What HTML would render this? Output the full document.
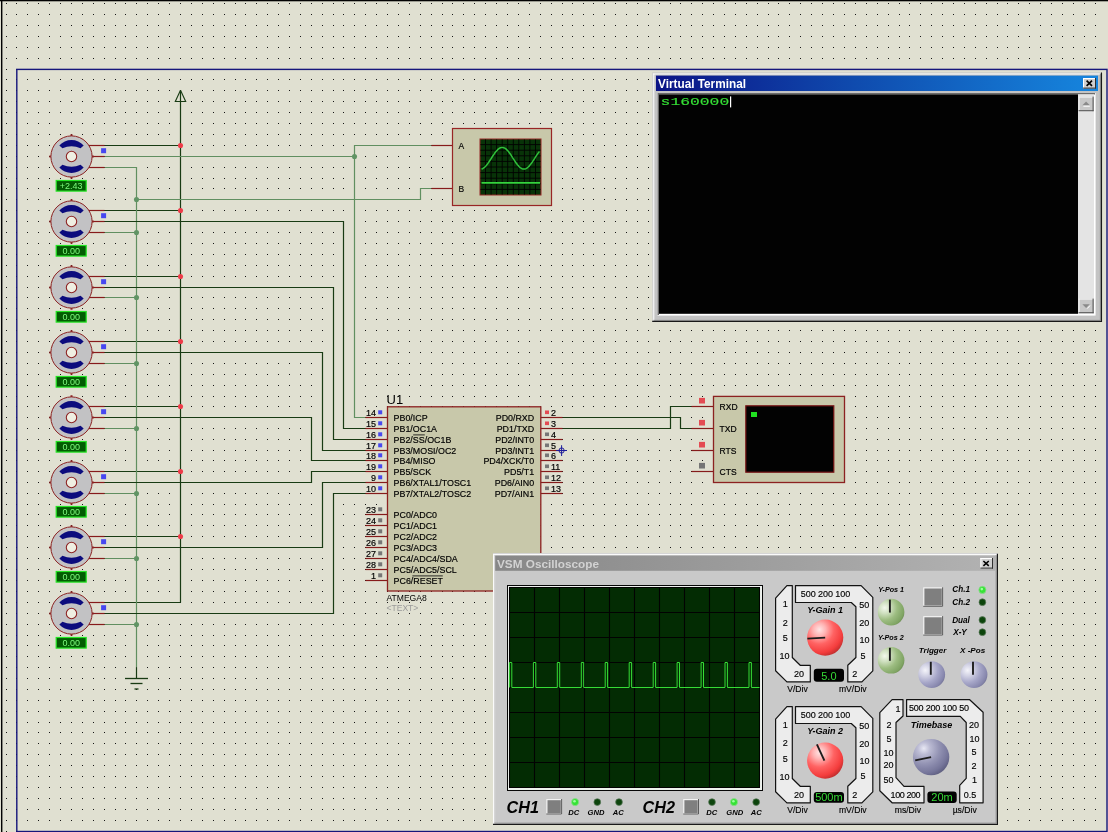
<!DOCTYPE html>
<html><head><meta charset="utf-8"><title>Proteus</title>
<style>html,body{margin:0;padding:0;background:#e0e0d1;overflow:hidden}svg{display:block}</style></head>
<body><svg width="1108" height="832" viewBox="0 0 1108 832">
<rect width="1108" height="832" fill="#e0e0d1"/>
<g opacity="0.996">
<defs><g id="r">
<rect x="6" width="1" height="1"/><rect x="16" width="1" height="1"/><rect x="27" width="1" height="1"/><rect x="38" width="1" height="1"/><rect x="49" width="1" height="1"/><rect x="60" width="1" height="1"/><rect x="71" width="1" height="1"/><rect x="82" width="1" height="1"/><rect x="93" width="1" height="1"/><rect x="104" width="1" height="1"/><rect x="115" width="1" height="1"/><rect x="125" width="1" height="1"/><rect x="136" width="1" height="1"/><rect x="147" width="1" height="1"/><rect x="158" width="1" height="1"/><rect x="169" width="1" height="1"/><rect x="180" width="1" height="1"/><rect x="191" width="1" height="1"/><rect x="202" width="1" height="1"/><rect x="213" width="1" height="1"/><rect x="224" width="1" height="1"/><rect x="235" width="1" height="1"/><rect x="245" width="1" height="1"/><rect x="256" width="1" height="1"/><rect x="267" width="1" height="1"/><rect x="278" width="1" height="1"/><rect x="289" width="1" height="1"/><rect x="300" width="1" height="1"/><rect x="311" width="1" height="1"/><rect x="322" width="1" height="1"/><rect x="333" width="1" height="1"/><rect x="343" width="1" height="1"/><rect x="354" width="1" height="1"/><rect x="365" width="1" height="1"/><rect x="376" width="1" height="1"/><rect x="387" width="1" height="1"/><rect x="398" width="1" height="1"/><rect x="409" width="1" height="1"/><rect x="420" width="1" height="1"/><rect x="431" width="1" height="1"/><rect x="442" width="1" height="1"/><rect x="452" width="1" height="1"/><rect x="463" width="1" height="1"/><rect x="474" width="1" height="1"/><rect x="485" width="1" height="1"/><rect x="496" width="1" height="1"/><rect x="507" width="1" height="1"/><rect x="518" width="1" height="1"/><rect x="529" width="1" height="1"/><rect x="540" width="1" height="1"/><rect x="551" width="1" height="1"/><rect x="562" width="1" height="1"/><rect x="572" width="1" height="1"/><rect x="583" width="1" height="1"/><rect x="593" width="1" height="1"/><rect x="604" width="1" height="1"/><rect x="615" width="1" height="1"/><rect x="626" width="1" height="1"/><rect x="637" width="1" height="1"/><rect x="648" width="1" height="1"/><rect x="659" width="1" height="1"/><rect x="670" width="1" height="1"/><rect x="680" width="1" height="1"/><rect x="691" width="1" height="1"/><rect x="702" width="1" height="1"/><rect x="713" width="1" height="1"/><rect x="724" width="1" height="1"/><rect x="735" width="1" height="1"/><rect x="746" width="1" height="1"/><rect x="757" width="1" height="1"/><rect x="768" width="1" height="1"/><rect x="778" width="1" height="1"/><rect x="789" width="1" height="1"/><rect x="800" width="1" height="1"/><rect x="811" width="1" height="1"/><rect x="822" width="1" height="1"/><rect x="833" width="1" height="1"/><rect x="844" width="1" height="1"/><rect x="855" width="1" height="1"/><rect x="866" width="1" height="1"/><rect x="877" width="1" height="1"/><rect x="888" width="1" height="1"/><rect x="899" width="1" height="1"/><rect x="909" width="1" height="1"/><rect x="920" width="1" height="1"/><rect x="931" width="1" height="1"/><rect x="942" width="1" height="1"/><rect x="953" width="1" height="1"/><rect x="964" width="1" height="1"/><rect x="975" width="1" height="1"/><rect x="986" width="1" height="1"/><rect x="997" width="1" height="1"/><rect x="1007" width="1" height="1"/><rect x="1018" width="1" height="1"/><rect x="1029" width="1" height="1"/><rect x="1040" width="1" height="1"/><rect x="1051" width="1" height="1"/><rect x="1062" width="1" height="1"/><rect x="1073" width="1" height="1"/><rect x="1084" width="1" height="1"/><rect x="1095" width="1" height="1"/>
</g></defs>
<g fill="#141414">
<use href="#r" y="3"/><use href="#r" y="14"/><use href="#r" y="25"/><use href="#r" y="36"/><use href="#r" y="47"/><use href="#r" y="58"/><use href="#r" y="69"/><use href="#r" y="79"/><use href="#r" y="90"/><use href="#r" y="101"/><use href="#r" y="112"/><use href="#r" y="123"/><use href="#r" y="134"/><use href="#r" y="145"/><use href="#r" y="156"/><use href="#r" y="167"/><use href="#r" y="178"/><use href="#r" y="188"/><use href="#r" y="199"/><use href="#r" y="210"/><use href="#r" y="221"/><use href="#r" y="232"/><use href="#r" y="243"/><use href="#r" y="254"/><use href="#r" y="265"/><use href="#r" y="276"/><use href="#r" y="287"/><use href="#r" y="297"/><use href="#r" y="308"/><use href="#r" y="319"/><use href="#r" y="330"/><use href="#r" y="341"/><use href="#r" y="352"/><use href="#r" y="363"/><use href="#r" y="374"/><use href="#r" y="385"/><use href="#r" y="396"/><use href="#r" y="406"/><use href="#r" y="417"/><use href="#r" y="428"/><use href="#r" y="439"/><use href="#r" y="450"/><use href="#r" y="460"/><use href="#r" y="471"/><use href="#r" y="482"/><use href="#r" y="493"/><use href="#r" y="504"/><use href="#r" y="514"/><use href="#r" y="525"/><use href="#r" y="536"/><use href="#r" y="547"/><use href="#r" y="558"/><use href="#r" y="569"/><use href="#r" y="580"/><use href="#r" y="591"/><use href="#r" y="602"/><use href="#r" y="613"/><use href="#r" y="624"/><use href="#r" y="635"/><use href="#r" y="645"/><use href="#r" y="656"/><use href="#r" y="667"/><use href="#r" y="678"/><use href="#r" y="689"/><use href="#r" y="700"/><use href="#r" y="711"/><use href="#r" y="722"/><use href="#r" y="732"/><use href="#r" y="743"/><use href="#r" y="754"/><use href="#r" y="765"/><use href="#r" y="776"/><use href="#r" y="787"/><use href="#r" y="798"/><use href="#r" y="809"/><use href="#r" y="820"/><use href="#r" y="831"/>
</g>
<rect x="1" y="0" width="1.4" height="832" fill="#000"/>
<rect x="0" y="0" width="1108" height="1.3" fill="#000"/>
<rect x="16.8" y="69.4" width="1090.2" height="762.1" fill="none" stroke="#15157a" stroke-width="1.4"/>
<path d="M180.5 90.5 L180.5 602.5" fill="none" stroke="#173a12" stroke-width="1.2" />
<path d="M180.5 90.2 L175.3 101.5 L185.7 101.5 L180.5 90.2" fill="none" stroke="#173a12" stroke-width="1.1" stroke-linejoin="miter"/>
<path d="M104.5 145.5 L180.5 145.5" fill="none" stroke="#173a12" stroke-width="1.2" />
<path d="M104.5 210.5 L180.5 210.5" fill="none" stroke="#173a12" stroke-width="1.2" />
<path d="M104.5 276.5 L180.5 276.5" fill="none" stroke="#173a12" stroke-width="1.2" />
<path d="M104.5 341.5 L180.5 341.5" fill="none" stroke="#173a12" stroke-width="1.2" />
<path d="M104.5 406.5 L180.5 406.5" fill="none" stroke="#173a12" stroke-width="1.2" />
<path d="M104.5 471.5 L180.5 471.5" fill="none" stroke="#173a12" stroke-width="1.2" />
<path d="M104.5 536.5 L180.5 536.5" fill="none" stroke="#173a12" stroke-width="1.2" />
<path d="M104.5 602.5 L180.5 602.5" fill="none" stroke="#173a12" stroke-width="1.2" />
<path d="M104.5 167.5 L136.5 167.5 L136.5 667.5" fill="none" stroke="#5f8f5f" stroke-width="1.2" />
<path d="M104.5 232.5 L136.5 232.5" fill="none" stroke="#5f8f5f" stroke-width="1.2" />
<path d="M104.5 297.5 L136.5 297.5" fill="none" stroke="#5f8f5f" stroke-width="1.2" />
<path d="M104.5 363.5 L136.5 363.5" fill="none" stroke="#5f8f5f" stroke-width="1.2" />
<path d="M104.5 428.5 L136.5 428.5" fill="none" stroke="#5f8f5f" stroke-width="1.2" />
<path d="M104.5 493.5 L136.5 493.5" fill="none" stroke="#5f8f5f" stroke-width="1.2" />
<path d="M104.5 558.5 L136.5 558.5" fill="none" stroke="#5f8f5f" stroke-width="1.2" />
<path d="M104.5 624.5 L136.5 624.5" fill="none" stroke="#5f8f5f" stroke-width="1.2" />
<path d="M136.5 667.5 L136.5 678.5" fill="none" stroke="#173a12" stroke-width="1.2" />
<path d="M125.0 678.5 L148.0 678.5" fill="none" stroke="#173a12" stroke-width="1.3" />
<path d="M130.5 683.5 L142.5 683.5" fill="none" stroke="#173a12" stroke-width="1.3" />
<path d="M134.5 689.0 L138.5 689.0" fill="none" stroke="#173a12" stroke-width="1.3" />
<path d="M136.5 199.5 L420.5 199.5 L420.5 188.5 L431.5 188.5" fill="none" stroke="#5f8f5f" stroke-width="1.2" />
<path d="M104.5 156.5 L354.5 156.5" fill="none" stroke="#5f8f5f" stroke-width="1.2" />
<path d="M431.5 145.5 L354.5 145.5 L354.5 417.5 L365.5 417.5" fill="none" stroke="#5f8f5f" stroke-width="1.2" />
<path d="M104.5 221.5 L343.5 221.5 L343.5 428.5 L365.5 428.5" fill="none" stroke="#173a12" stroke-width="1.2" />
<path d="M104.5 287.5 L333.5 287.5 L333.5 439.5 L365.5 439.5" fill="none" stroke="#173a12" stroke-width="1.2" />
<path d="M104.5 352.5 L322.5 352.5 L322.5 450.5 L365.5 450.5" fill="none" stroke="#173a12" stroke-width="1.2" />
<path d="M104.5 417.5 L311.5 417.5 L311.5 460.5 L365.5 460.5" fill="none" stroke="#173a12" stroke-width="1.2" />
<path d="M104.5 482.5 L311.5 482.5 L311.5 471.5 L365.5 471.5" fill="none" stroke="#173a12" stroke-width="1.2" />
<path d="M104.5 547.5 L322.5 547.5 L322.5 482.5 L365.5 482.5" fill="none" stroke="#173a12" stroke-width="1.2" />
<path d="M104.5 613.5 L333.5 613.5 L333.5 493.5 L365.5 493.5" fill="none" stroke="#173a12" stroke-width="1.2" />
<path d="M562.5 417.5 L680.5 417.5 L680.5 428.5 L691.5 428.5" fill="none" stroke="#173a12" stroke-width="1.2" />
<path d="M562.5 428.5 L670.5 428.5 L670.5 406.5 L691.5 406.5" fill="none" stroke="#173a12" stroke-width="1.2" />
<circle cx="180.5" cy="145.5" r="2.55" fill="#ee3a48"/>
<circle cx="180.5" cy="210.5" r="2.55" fill="#ee3a48"/>
<circle cx="180.5" cy="276.5" r="2.55" fill="#ee3a48"/>
<circle cx="180.5" cy="341.5" r="2.55" fill="#ee3a48"/>
<circle cx="180.5" cy="406.5" r="2.55" fill="#ee3a48"/>
<circle cx="180.5" cy="471.5" r="2.55" fill="#ee3a48"/>
<circle cx="180.5" cy="536.5" r="2.55" fill="#ee3a48"/>
<circle cx="136.5" cy="199.5" r="2.55" fill="#5f9363"/>
<circle cx="136.5" cy="232.5" r="2.55" fill="#5f9363"/>
<circle cx="136.5" cy="297.5" r="2.55" fill="#5f9363"/>
<circle cx="136.5" cy="363.5" r="2.55" fill="#5f9363"/>
<circle cx="136.5" cy="428.5" r="2.55" fill="#5f9363"/>
<circle cx="136.5" cy="493.5" r="2.55" fill="#5f9363"/>
<circle cx="136.5" cy="558.5" r="2.55" fill="#5f9363"/>
<circle cx="136.5" cy="624.5" r="2.55" fill="#5f9363"/>
<circle cx="354.5" cy="156.5" r="2.55" fill="#5f9363"/>
<path d="M86.5 145.5 L104.5 145.5" fill="none" stroke="#861a1a" stroke-width="1.2" />
<path d="M86.5 156.5 L104.5 156.5" fill="none" stroke="#861a1a" stroke-width="1.2" />
<path d="M86.5 167.5 L104.5 167.5" fill="none" stroke="#861a1a" stroke-width="1.2" />
<circle cx="71.5" cy="156.5" r="20.6" fill="#c2c2c4" stroke="#8a2020" stroke-width="1"/>
<path d="M71.5 135.9 v-1.6 M71.5 177.1 v1.6 M50.9 156.5 h-1.6 M92.1 156.5 h1.6" stroke="#8e2424" stroke-width="2"/>
<path d="M59.31 145.53 A16.40 16.40 0 0 1 83.69 145.53 L80.57 148.34 A22.19 22.19 0 0 0 62.43 148.34 Z" fill="#0a0a7c"/>
<path d="M59.31 167.47 A16.40 16.40 0 0 0 83.69 167.47 L80.57 164.66 A22.19 22.19 0 0 1 62.43 164.66 Z" fill="#0a0a7c"/>
<circle cx="71.5" cy="156.5" r="5.2" fill="#efefe2" stroke="#8e2424" stroke-width="1.1"/>
<rect x="101.1" y="148.2" width="5" height="5" fill="#4646f0"/>
<rect x="56.2" y="180.5" width="30" height="10.6" fill="#025a02" stroke="#22e622" stroke-width="1.2"/>
<text x="71.2" y="189.1" font-family="Liberation Sans, Arial, sans-serif" font-size="9" fill="#7dfa7d" text-anchor="middle">+2.43</text>
<path d="M86.5 210.5 L104.5 210.5" fill="none" stroke="#861a1a" stroke-width="1.2" />
<path d="M86.5 221.5 L104.5 221.5" fill="none" stroke="#861a1a" stroke-width="1.2" />
<path d="M86.5 232.5 L104.5 232.5" fill="none" stroke="#861a1a" stroke-width="1.2" />
<circle cx="71.5" cy="221.5" r="20.6" fill="#c2c2c4" stroke="#8a2020" stroke-width="1"/>
<path d="M71.5 200.9 v-1.6 M71.5 242.1 v1.6 M50.9 221.5 h-1.6 M92.1 221.5 h1.6" stroke="#8e2424" stroke-width="2"/>
<path d="M59.31 210.53 A16.40 16.40 0 0 1 83.69 210.53 L80.57 213.34 A22.19 22.19 0 0 0 62.43 213.34 Z" fill="#0a0a7c"/>
<path d="M59.31 232.47 A16.40 16.40 0 0 0 83.69 232.47 L80.57 229.66 A22.19 22.19 0 0 1 62.43 229.66 Z" fill="#0a0a7c"/>
<circle cx="71.5" cy="221.5" r="5.2" fill="#efefe2" stroke="#8e2424" stroke-width="1.1"/>
<rect x="101.1" y="213.2" width="5" height="5" fill="#4646f0"/>
<rect x="56.2" y="245.5" width="30" height="10.6" fill="#025a02" stroke="#22e622" stroke-width="1.2"/>
<text x="71.2" y="254.1" font-family="Liberation Sans, Arial, sans-serif" font-size="9" fill="#7dfa7d" text-anchor="middle">0.00</text>
<path d="M86.5 276.5 L104.5 276.5" fill="none" stroke="#861a1a" stroke-width="1.2" />
<path d="M86.5 287.5 L104.5 287.5" fill="none" stroke="#861a1a" stroke-width="1.2" />
<path d="M86.5 297.5 L104.5 297.5" fill="none" stroke="#861a1a" stroke-width="1.2" />
<circle cx="71.5" cy="287.5" r="20.6" fill="#c2c2c4" stroke="#8a2020" stroke-width="1"/>
<path d="M71.5 266.9 v-1.6 M71.5 308.1 v1.6 M50.9 287.5 h-1.6 M92.1 287.5 h1.6" stroke="#8e2424" stroke-width="2"/>
<path d="M59.31 276.53 A16.40 16.40 0 0 1 83.69 276.53 L80.57 279.34 A22.19 22.19 0 0 0 62.43 279.34 Z" fill="#0a0a7c"/>
<path d="M59.31 298.47 A16.40 16.40 0 0 0 83.69 298.47 L80.57 295.66 A22.19 22.19 0 0 1 62.43 295.66 Z" fill="#0a0a7c"/>
<circle cx="71.5" cy="287.5" r="5.2" fill="#efefe2" stroke="#8e2424" stroke-width="1.1"/>
<rect x="101.1" y="279.2" width="5" height="5" fill="#4646f0"/>
<rect x="56.2" y="311.5" width="30" height="10.6" fill="#025a02" stroke="#22e622" stroke-width="1.2"/>
<text x="71.2" y="320.1" font-family="Liberation Sans, Arial, sans-serif" font-size="9" fill="#7dfa7d" text-anchor="middle">0.00</text>
<path d="M86.5 341.5 L104.5 341.5" fill="none" stroke="#861a1a" stroke-width="1.2" />
<path d="M86.5 352.5 L104.5 352.5" fill="none" stroke="#861a1a" stroke-width="1.2" />
<path d="M86.5 363.5 L104.5 363.5" fill="none" stroke="#861a1a" stroke-width="1.2" />
<circle cx="71.5" cy="352.5" r="20.6" fill="#c2c2c4" stroke="#8a2020" stroke-width="1"/>
<path d="M71.5 331.9 v-1.6 M71.5 373.1 v1.6 M50.9 352.5 h-1.6 M92.1 352.5 h1.6" stroke="#8e2424" stroke-width="2"/>
<path d="M59.31 341.53 A16.40 16.40 0 0 1 83.69 341.53 L80.57 344.34 A22.19 22.19 0 0 0 62.43 344.34 Z" fill="#0a0a7c"/>
<path d="M59.31 363.47 A16.40 16.40 0 0 0 83.69 363.47 L80.57 360.66 A22.19 22.19 0 0 1 62.43 360.66 Z" fill="#0a0a7c"/>
<circle cx="71.5" cy="352.5" r="5.2" fill="#efefe2" stroke="#8e2424" stroke-width="1.1"/>
<rect x="101.1" y="344.2" width="5" height="5" fill="#4646f0"/>
<rect x="56.2" y="376.5" width="30" height="10.6" fill="#025a02" stroke="#22e622" stroke-width="1.2"/>
<text x="71.2" y="385.1" font-family="Liberation Sans, Arial, sans-serif" font-size="9" fill="#7dfa7d" text-anchor="middle">0.00</text>
<path d="M86.5 406.5 L104.5 406.5" fill="none" stroke="#861a1a" stroke-width="1.2" />
<path d="M86.5 417.5 L104.5 417.5" fill="none" stroke="#861a1a" stroke-width="1.2" />
<path d="M86.5 428.5 L104.5 428.5" fill="none" stroke="#861a1a" stroke-width="1.2" />
<circle cx="71.5" cy="417.5" r="20.6" fill="#c2c2c4" stroke="#8a2020" stroke-width="1"/>
<path d="M71.5 396.9 v-1.6 M71.5 438.1 v1.6 M50.9 417.5 h-1.6 M92.1 417.5 h1.6" stroke="#8e2424" stroke-width="2"/>
<path d="M59.31 406.53 A16.40 16.40 0 0 1 83.69 406.53 L80.57 409.34 A22.19 22.19 0 0 0 62.43 409.34 Z" fill="#0a0a7c"/>
<path d="M59.31 428.47 A16.40 16.40 0 0 0 83.69 428.47 L80.57 425.66 A22.19 22.19 0 0 1 62.43 425.66 Z" fill="#0a0a7c"/>
<circle cx="71.5" cy="417.5" r="5.2" fill="#efefe2" stroke="#8e2424" stroke-width="1.1"/>
<rect x="101.1" y="409.2" width="5" height="5" fill="#4646f0"/>
<rect x="56.2" y="441.5" width="30" height="10.6" fill="#025a02" stroke="#22e622" stroke-width="1.2"/>
<text x="71.2" y="450.1" font-family="Liberation Sans, Arial, sans-serif" font-size="9" fill="#7dfa7d" text-anchor="middle">0.00</text>
<path d="M86.5 471.5 L104.5 471.5" fill="none" stroke="#861a1a" stroke-width="1.2" />
<path d="M86.5 482.5 L104.5 482.5" fill="none" stroke="#861a1a" stroke-width="1.2" />
<path d="M86.5 493.5 L104.5 493.5" fill="none" stroke="#861a1a" stroke-width="1.2" />
<circle cx="71.5" cy="482.5" r="20.6" fill="#c2c2c4" stroke="#8a2020" stroke-width="1"/>
<path d="M71.5 461.9 v-1.6 M71.5 503.1 v1.6 M50.9 482.5 h-1.6 M92.1 482.5 h1.6" stroke="#8e2424" stroke-width="2"/>
<path d="M59.31 471.53 A16.40 16.40 0 0 1 83.69 471.53 L80.57 474.34 A22.19 22.19 0 0 0 62.43 474.34 Z" fill="#0a0a7c"/>
<path d="M59.31 493.47 A16.40 16.40 0 0 0 83.69 493.47 L80.57 490.66 A22.19 22.19 0 0 1 62.43 490.66 Z" fill="#0a0a7c"/>
<circle cx="71.5" cy="482.5" r="5.2" fill="#efefe2" stroke="#8e2424" stroke-width="1.1"/>
<rect x="101.1" y="474.2" width="5" height="5" fill="#4646f0"/>
<rect x="56.2" y="506.5" width="30" height="10.6" fill="#025a02" stroke="#22e622" stroke-width="1.2"/>
<text x="71.2" y="515.1" font-family="Liberation Sans, Arial, sans-serif" font-size="9" fill="#7dfa7d" text-anchor="middle">0.00</text>
<path d="M86.5 536.5 L104.5 536.5" fill="none" stroke="#861a1a" stroke-width="1.2" />
<path d="M86.5 547.5 L104.5 547.5" fill="none" stroke="#861a1a" stroke-width="1.2" />
<path d="M86.5 558.5 L104.5 558.5" fill="none" stroke="#861a1a" stroke-width="1.2" />
<circle cx="71.5" cy="547.5" r="20.6" fill="#c2c2c4" stroke="#8a2020" stroke-width="1"/>
<path d="M71.5 526.9 v-1.6 M71.5 568.1 v1.6 M50.9 547.5 h-1.6 M92.1 547.5 h1.6" stroke="#8e2424" stroke-width="2"/>
<path d="M59.31 536.53 A16.40 16.40 0 0 1 83.69 536.53 L80.57 539.34 A22.19 22.19 0 0 0 62.43 539.34 Z" fill="#0a0a7c"/>
<path d="M59.31 558.47 A16.40 16.40 0 0 0 83.69 558.47 L80.57 555.66 A22.19 22.19 0 0 1 62.43 555.66 Z" fill="#0a0a7c"/>
<circle cx="71.5" cy="547.5" r="5.2" fill="#efefe2" stroke="#8e2424" stroke-width="1.1"/>
<rect x="101.1" y="539.2" width="5" height="5" fill="#4646f0"/>
<rect x="56.2" y="571.5" width="30" height="10.6" fill="#025a02" stroke="#22e622" stroke-width="1.2"/>
<text x="71.2" y="580.1" font-family="Liberation Sans, Arial, sans-serif" font-size="9" fill="#7dfa7d" text-anchor="middle">0.00</text>
<path d="M86.5 602.5 L104.5 602.5" fill="none" stroke="#861a1a" stroke-width="1.2" />
<path d="M86.5 613.5 L104.5 613.5" fill="none" stroke="#861a1a" stroke-width="1.2" />
<path d="M86.5 624.5 L104.5 624.5" fill="none" stroke="#861a1a" stroke-width="1.2" />
<circle cx="71.5" cy="613.5" r="20.6" fill="#c2c2c4" stroke="#8a2020" stroke-width="1"/>
<path d="M71.5 592.9 v-1.6 M71.5 634.1 v1.6 M50.9 613.5 h-1.6 M92.1 613.5 h1.6" stroke="#8e2424" stroke-width="2"/>
<path d="M59.31 602.53 A16.40 16.40 0 0 1 83.69 602.53 L80.57 605.34 A22.19 22.19 0 0 0 62.43 605.34 Z" fill="#0a0a7c"/>
<path d="M59.31 624.47 A16.40 16.40 0 0 0 83.69 624.47 L80.57 621.66 A22.19 22.19 0 0 1 62.43 621.66 Z" fill="#0a0a7c"/>
<circle cx="71.5" cy="613.5" r="5.2" fill="#efefe2" stroke="#8e2424" stroke-width="1.1"/>
<rect x="101.1" y="605.2" width="5" height="5" fill="#4646f0"/>
<rect x="56.2" y="637.5" width="30" height="10.6" fill="#025a02" stroke="#22e622" stroke-width="1.2"/>
<text x="71.2" y="646.1" font-family="Liberation Sans, Arial, sans-serif" font-size="9" fill="#7dfa7d" text-anchor="middle">0.00</text>
<path d="M431.5 145.5 L452.5 145.5" fill="none" stroke="#861a1a" stroke-width="1.2" />
<path d="M431.5 188.5 L452.5 188.5" fill="none" stroke="#861a1a" stroke-width="1.2" />
<rect x="452.5" y="128.5" width="99.0" height="77.0" fill="#c8c8aa" stroke="#982424" stroke-width="1.2"/>
<text x="458.4" y="148.6" font-family="Liberation Sans, Arial, sans-serif" font-size="8.5" fill="#000" stroke="#000" stroke-width="0.15">A</text>
<text x="458.6" y="191.8" font-family="Liberation Sans, Arial, sans-serif" font-size="8.5" fill="#000" stroke="#000" stroke-width="0.15">B</text>
<rect x="480.0" y="139.0" width="61.0" height="56.0" fill="#073207" stroke="#962424" stroke-width="1"/>
<path d="M485.5 139.5 V194.5 M491.1 139.5 V194.5 M496.6 139.5 V194.5 M502.2 139.5 V194.5 M507.7 139.5 V194.5 M513.3 139.5 V194.5 M518.8 139.5 V194.5 M524.4 139.5 V194.5 M529.9 139.5 V194.5 M535.5 139.5 V194.5 M480.5 144.6 H540.5 M480.5 150.2 H540.5 M480.5 155.8 H540.5 M480.5 161.4 H540.5 M480.5 167.0 H540.5 M480.5 172.6 H540.5 M480.5 178.2 H540.5 M480.5 183.8 H540.5 M480.5 189.4 H540.5 " stroke="#000" stroke-width="1" fill="none" opacity="0.9"/>
<path d="M481.5 169.0 L482.5 168.7 L483.4 168.1 L484.4 167.4 L485.4 166.5 L486.3 165.5 L487.3 164.3 L488.3 162.9 L489.2 161.5 L490.2 160.0 L491.2 158.5 L492.1 157.0 L493.1 155.5 L494.1 154.1 L495.0 152.7 L496.0 151.5 L497.0 150.4 L497.9 149.4 L498.9 148.6 L499.9 148.0 L500.8 147.6 L501.8 147.4 L502.8 147.4 L503.7 147.7 L504.7 148.1 L505.7 148.7 L506.6 149.6 L507.6 150.6 L508.6 151.7 L509.5 153.0 L510.5 154.3 L511.5 155.8 L512.4 157.3 L513.4 158.8 L514.4 160.3 L515.3 161.8 L516.3 163.2 L517.3 164.5 L518.2 165.6 L519.2 166.7 L520.2 167.6 L521.1 168.2 L522.1 168.7 L523.1 169.0 L524.0 169.1 L525.0 169.0 L526.0 168.6 L526.9 168.1 L527.9 167.3 L528.9 166.4 L529.8 165.3 L530.8 164.1 L531.8 162.8 L532.7 161.4 L533.7 159.9 L534.7 158.4 L535.6 156.9 L536.6 155.4 L537.6 153.9 L538.5 152.6 L539.5 151.4" fill="none" stroke="#2fc03a" stroke-width="1.5" />
<path d="M481.5 182.9 L540.0 182.9" fill="none" stroke="#33d43c" stroke-width="1.9" />
<path d="M365.5 417.5 L387.5 417.5" fill="none" stroke="#861a1a" stroke-width="1.2" />
<path d="M365.5 428.5 L387.5 428.5" fill="none" stroke="#861a1a" stroke-width="1.2" />
<path d="M365.5 439.5 L387.5 439.5" fill="none" stroke="#861a1a" stroke-width="1.2" />
<path d="M365.5 450.5 L387.5 450.5" fill="none" stroke="#861a1a" stroke-width="1.2" />
<path d="M365.5 460.5 L387.5 460.5" fill="none" stroke="#861a1a" stroke-width="1.2" />
<path d="M365.5 471.5 L387.5 471.5" fill="none" stroke="#861a1a" stroke-width="1.2" />
<path d="M365.5 482.5 L387.5 482.5" fill="none" stroke="#861a1a" stroke-width="1.2" />
<path d="M365.5 493.5 L387.5 493.5" fill="none" stroke="#861a1a" stroke-width="1.2" />
<path d="M365.5 514.5 L387.5 514.5" fill="none" stroke="#861a1a" stroke-width="1.2" />
<path d="M365.5 525.5 L387.5 525.5" fill="none" stroke="#861a1a" stroke-width="1.2" />
<path d="M365.5 536.5 L387.5 536.5" fill="none" stroke="#861a1a" stroke-width="1.2" />
<path d="M365.5 547.5 L387.5 547.5" fill="none" stroke="#861a1a" stroke-width="1.2" />
<path d="M365.5 558.5 L387.5 558.5" fill="none" stroke="#861a1a" stroke-width="1.2" />
<path d="M365.5 569.5 L387.5 569.5" fill="none" stroke="#861a1a" stroke-width="1.2" />
<path d="M365.5 580.5 L387.5 580.5" fill="none" stroke="#861a1a" stroke-width="1.2" />
<path d="M540.8 417.5 L562.5 417.5" fill="none" stroke="#861a1a" stroke-width="1.2" />
<path d="M540.8 428.5 L562.5 428.5" fill="none" stroke="#861a1a" stroke-width="1.2" />
<path d="M540.8 439.5 L562.5 439.5" fill="none" stroke="#861a1a" stroke-width="1.2" />
<path d="M540.8 450.5 L562.5 450.5" fill="none" stroke="#861a1a" stroke-width="1.2" />
<path d="M540.8 460.5 L562.5 460.5" fill="none" stroke="#861a1a" stroke-width="1.2" />
<path d="M540.8 471.5 L562.5 471.5" fill="none" stroke="#861a1a" stroke-width="1.2" />
<path d="M540.8 482.5 L562.5 482.5" fill="none" stroke="#861a1a" stroke-width="1.2" />
<path d="M540.8 493.5 L562.5 493.5" fill="none" stroke="#861a1a" stroke-width="1.2" />
<rect x="387.5" y="406.8" width="153.3" height="184.2" fill="#c8c8aa" stroke="#8c2020" stroke-width="1.3"/>
<text x="376" y="415.5" font-family="Liberation Sans, Arial, sans-serif" font-size="9" fill="#000" stroke="#000" stroke-width="0.2" text-anchor="end">14</text>
<rect x="378.2" y="410.3" width="4" height="4" fill="#4848ee"/>
<text x="393.6" y="420.7" font-family="Liberation Sans, Arial, sans-serif" font-size="8.9" fill="#000" stroke="#000" stroke-width="0.18">PB0/ICP</text>
<text x="376" y="426.5" font-family="Liberation Sans, Arial, sans-serif" font-size="9" fill="#000" stroke="#000" stroke-width="0.2" text-anchor="end">15</text>
<rect x="378.2" y="421.3" width="4" height="4" fill="#4848ee"/>
<text x="393.6" y="431.7" font-family="Liberation Sans, Arial, sans-serif" font-size="8.9" fill="#000" stroke="#000" stroke-width="0.18">PB1/OC1A</text>
<text x="376" y="437.5" font-family="Liberation Sans, Arial, sans-serif" font-size="9" fill="#000" stroke="#000" stroke-width="0.2" text-anchor="end">16</text>
<rect x="378.2" y="432.3" width="4" height="4" fill="#4848ee"/>
<text x="393.6" y="442.7" font-family="Liberation Sans, Arial, sans-serif" font-size="8.9" fill="#000" stroke="#000" stroke-width="0.18">PB2/SS/OC1B</text>
<text x="376" y="448.5" font-family="Liberation Sans, Arial, sans-serif" font-size="9" fill="#000" stroke="#000" stroke-width="0.2" text-anchor="end">17</text>
<rect x="378.2" y="443.3" width="4" height="4" fill="#4848ee"/>
<text x="393.6" y="453.7" font-family="Liberation Sans, Arial, sans-serif" font-size="8.9" fill="#000" stroke="#000" stroke-width="0.18">PB3/MOSI/OC2</text>
<text x="376" y="458.5" font-family="Liberation Sans, Arial, sans-serif" font-size="9" fill="#000" stroke="#000" stroke-width="0.2" text-anchor="end">18</text>
<rect x="378.2" y="453.3" width="4" height="4" fill="#4848ee"/>
<text x="393.6" y="463.7" font-family="Liberation Sans, Arial, sans-serif" font-size="8.9" fill="#000" stroke="#000" stroke-width="0.18">PB4/MISO</text>
<text x="376" y="469.5" font-family="Liberation Sans, Arial, sans-serif" font-size="9" fill="#000" stroke="#000" stroke-width="0.2" text-anchor="end">19</text>
<rect x="378.2" y="464.3" width="4" height="4" fill="#4848ee"/>
<text x="393.6" y="474.7" font-family="Liberation Sans, Arial, sans-serif" font-size="8.9" fill="#000" stroke="#000" stroke-width="0.18">PB5/SCK</text>
<text x="376" y="480.5" font-family="Liberation Sans, Arial, sans-serif" font-size="9" fill="#000" stroke="#000" stroke-width="0.2" text-anchor="end">9</text>
<rect x="378.2" y="475.3" width="4" height="4" fill="#4848ee"/>
<text x="393.6" y="485.7" font-family="Liberation Sans, Arial, sans-serif" font-size="8.9" fill="#000" stroke="#000" stroke-width="0.18">PB6/XTAL1/TOSC1</text>
<text x="376" y="491.5" font-family="Liberation Sans, Arial, sans-serif" font-size="9" fill="#000" stroke="#000" stroke-width="0.2" text-anchor="end">10</text>
<rect x="378.2" y="486.3" width="4" height="4" fill="#4848ee"/>
<text x="393.6" y="496.7" font-family="Liberation Sans, Arial, sans-serif" font-size="8.9" fill="#000" stroke="#000" stroke-width="0.18">PB7/XTAL2/TOSC2</text>
<text x="376" y="512.5" font-family="Liberation Sans, Arial, sans-serif" font-size="9" fill="#000" stroke="#000" stroke-width="0.2" text-anchor="end">23</text>
<rect x="378.2" y="507.3" width="4" height="4" fill="#757575"/>
<text x="393.6" y="517.7" font-family="Liberation Sans, Arial, sans-serif" font-size="8.9" fill="#000" stroke="#000" stroke-width="0.18">PC0/ADC0</text>
<text x="376" y="523.5" font-family="Liberation Sans, Arial, sans-serif" font-size="9" fill="#000" stroke="#000" stroke-width="0.2" text-anchor="end">24</text>
<rect x="378.2" y="518.3" width="4" height="4" fill="#757575"/>
<text x="393.6" y="528.7" font-family="Liberation Sans, Arial, sans-serif" font-size="8.9" fill="#000" stroke="#000" stroke-width="0.18">PC1/ADC1</text>
<text x="376" y="534.5" font-family="Liberation Sans, Arial, sans-serif" font-size="9" fill="#000" stroke="#000" stroke-width="0.2" text-anchor="end">25</text>
<rect x="378.2" y="529.3" width="4" height="4" fill="#757575"/>
<text x="393.6" y="539.7" font-family="Liberation Sans, Arial, sans-serif" font-size="8.9" fill="#000" stroke="#000" stroke-width="0.18">PC2/ADC2</text>
<text x="376" y="545.5" font-family="Liberation Sans, Arial, sans-serif" font-size="9" fill="#000" stroke="#000" stroke-width="0.2" text-anchor="end">26</text>
<rect x="378.2" y="540.3" width="4" height="4" fill="#757575"/>
<text x="393.6" y="550.7" font-family="Liberation Sans, Arial, sans-serif" font-size="8.9" fill="#000" stroke="#000" stroke-width="0.18">PC3/ADC3</text>
<text x="376" y="556.5" font-family="Liberation Sans, Arial, sans-serif" font-size="9" fill="#000" stroke="#000" stroke-width="0.2" text-anchor="end">27</text>
<rect x="378.2" y="551.3" width="4" height="4" fill="#757575"/>
<text x="393.6" y="561.7" font-family="Liberation Sans, Arial, sans-serif" font-size="8.9" fill="#000" stroke="#000" stroke-width="0.18">PC4/ADC4/SDA</text>
<text x="376" y="567.5" font-family="Liberation Sans, Arial, sans-serif" font-size="9" fill="#000" stroke="#000" stroke-width="0.2" text-anchor="end">28</text>
<rect x="378.2" y="562.3" width="4" height="4" fill="#757575"/>
<text x="393.6" y="572.7" font-family="Liberation Sans, Arial, sans-serif" font-size="8.9" fill="#000" stroke="#000" stroke-width="0.18">PC5/ADC5/SCL</text>
<text x="376" y="578.5" font-family="Liberation Sans, Arial, sans-serif" font-size="9" fill="#000" stroke="#000" stroke-width="0.2" text-anchor="end">1</text>
<rect x="378.2" y="573.3" width="4" height="4" fill="#757575"/>
<text x="393.6" y="583.7" font-family="Liberation Sans, Arial, sans-serif" font-size="8.9" fill="#000" stroke="#000" stroke-width="0.18">PC6/RESET</text>
<text x="551" y="415.5" font-family="Liberation Sans, Arial, sans-serif" font-size="9" fill="#000" stroke="#000" stroke-width="0.2">2</text>
<rect x="545" y="410.5" width="4" height="3.6" fill="#e44a52"/>
<text x="534.2" y="420.7" font-family="Liberation Sans, Arial, sans-serif" font-size="8.9" fill="#000" stroke="#000" stroke-width="0.18" text-anchor="end">PD0/RXD</text>
<text x="551" y="426.5" font-family="Liberation Sans, Arial, sans-serif" font-size="9" fill="#000" stroke="#000" stroke-width="0.2">3</text>
<rect x="545" y="421.5" width="4" height="3.6" fill="#e44a52"/>
<text x="534.2" y="431.7" font-family="Liberation Sans, Arial, sans-serif" font-size="8.9" fill="#000" stroke="#000" stroke-width="0.18" text-anchor="end">PD1/TXD</text>
<text x="551" y="437.5" font-family="Liberation Sans, Arial, sans-serif" font-size="9" fill="#000" stroke="#000" stroke-width="0.2">4</text>
<rect x="545" y="432.5" width="4" height="3.6" fill="#757575"/>
<text x="534.2" y="442.7" font-family="Liberation Sans, Arial, sans-serif" font-size="8.9" fill="#000" stroke="#000" stroke-width="0.18" text-anchor="end">PD2/INT0</text>
<text x="551" y="448.5" font-family="Liberation Sans, Arial, sans-serif" font-size="9" fill="#000" stroke="#000" stroke-width="0.2">5</text>
<rect x="545" y="443.5" width="4" height="3.6" fill="#757575"/>
<text x="534.2" y="453.7" font-family="Liberation Sans, Arial, sans-serif" font-size="8.9" fill="#000" stroke="#000" stroke-width="0.18" text-anchor="end">PD3/INT1</text>
<text x="551" y="458.5" font-family="Liberation Sans, Arial, sans-serif" font-size="9" fill="#000" stroke="#000" stroke-width="0.2">6</text>
<rect x="545" y="453.5" width="4" height="3.6" fill="#757575"/>
<text x="534.2" y="463.7" font-family="Liberation Sans, Arial, sans-serif" font-size="8.9" fill="#000" stroke="#000" stroke-width="0.18" text-anchor="end">PD4/XCK/T0</text>
<text x="551" y="469.5" font-family="Liberation Sans, Arial, sans-serif" font-size="9" fill="#000" stroke="#000" stroke-width="0.2">11</text>
<rect x="545" y="464.5" width="4" height="3.6" fill="#757575"/>
<text x="534.2" y="474.7" font-family="Liberation Sans, Arial, sans-serif" font-size="8.9" fill="#000" stroke="#000" stroke-width="0.18" text-anchor="end">PD5/T1</text>
<text x="551" y="480.5" font-family="Liberation Sans, Arial, sans-serif" font-size="9" fill="#000" stroke="#000" stroke-width="0.2">12</text>
<rect x="545" y="475.5" width="4" height="3.6" fill="#757575"/>
<text x="534.2" y="485.7" font-family="Liberation Sans, Arial, sans-serif" font-size="8.9" fill="#000" stroke="#000" stroke-width="0.18" text-anchor="end">PD6/AIN0</text>
<text x="551" y="491.5" font-family="Liberation Sans, Arial, sans-serif" font-size="9" fill="#000" stroke="#000" stroke-width="0.2">13</text>
<rect x="545" y="486.5" width="4" height="3.6" fill="#757575"/>
<text x="534.2" y="496.7" font-family="Liberation Sans, Arial, sans-serif" font-size="8.9" fill="#000" stroke="#000" stroke-width="0.18" text-anchor="end">PD7/AIN1</text>
<path d="M413.2 434.9 h11.6 M412.4 575.9 h30.4" stroke="#000" stroke-width="0.8"/>
<text x="386.6" y="403.8" font-family="Liberation Sans, Arial, sans-serif" font-size="13" fill="#000">U1</text>
<text x="386.4" y="600.6" font-family="Liberation Sans, Arial, sans-serif" font-size="8.6" fill="#000">ATMEGA8</text>
<text x="386.4" y="610.6" font-family="Liberation Sans, Arial, sans-serif" font-size="8.6" fill="#9a9a9a">&lt;TEXT&gt;</text>
<g stroke="#1a1a9a" stroke-width="1" fill="none"><circle cx="561.6" cy="450.5" r="2.6"/><path d="M556.2 450.5h10.8M561.6 445.2v10.8"/></g>
<path d="M691.5 406.5 L713.5 406.5" fill="none" stroke="#861a1a" stroke-width="1.2" />
<path d="M691.5 428.5 L713.5 428.5" fill="none" stroke="#861a1a" stroke-width="1.2" />
<path d="M691.5 450.5 L713.5 450.5" fill="none" stroke="#861a1a" stroke-width="1.2" />
<path d="M691.5 471.5 L713.5 471.5" fill="none" stroke="#861a1a" stroke-width="1.2" />
<rect x="713.5" y="396.4" width="131.0" height="86.1" fill="#c8c8aa" stroke="#8c2020" stroke-width="1.3"/>
<rect x="699" y="397.9" width="6" height="5.6" fill="#e44a52"/>
<text x="719.6" y="409.6" font-family="Liberation Sans, Arial, sans-serif" font-size="8.5" fill="#000" stroke="#000" stroke-width="0.2">RXD</text>
<rect x="699" y="419.9" width="6" height="5.6" fill="#e44a52"/>
<text x="719.6" y="431.6" font-family="Liberation Sans, Arial, sans-serif" font-size="8.5" fill="#000" stroke="#000" stroke-width="0.2">TXD</text>
<rect x="699" y="441.9" width="6" height="5.6" fill="#e44a52"/>
<text x="719.6" y="453.6" font-family="Liberation Sans, Arial, sans-serif" font-size="8.5" fill="#000" stroke="#000" stroke-width="0.2">RTS</text>
<rect x="699" y="462.9" width="6" height="5.6" fill="#757575"/>
<text x="719.6" y="474.6" font-family="Liberation Sans, Arial, sans-serif" font-size="8.5" fill="#000" stroke="#000" stroke-width="0.2">CTS</text>
<rect x="745.8" y="405.8" width="88" height="66.4" fill="#000" stroke="#7a1414" stroke-width="1.2"/>
<rect x="751" y="412" width="6" height="5" fill="#1fe01f"/>
<defs><linearGradient id="tg" x1="0" x2="1" y1="0" y2="0"><stop offset="0" stop-color="#0a1286"/><stop offset="0.45" stop-color="#0e4aae"/><stop offset="1" stop-color="#1585de"/></linearGradient></defs>
<rect x="652.2" y="72.4" width="449.8" height="249.6" fill="#c3c3c3"/>
<path d="M652.2 73.0 H1102.0 M652.8 72.4 V322.0" stroke="#d6d6d2" stroke-width="1.1" fill="none"/>
<path d="M652.2 321.4 H1102.0 M1101.5 72.4 V322.0" stroke="#161616" stroke-width="1.1" fill="none"/>
<path d="M653.3 74.0 H1100.9 M653.8 73.5 V320.9" stroke="#ffffff" stroke-width="1" fill="none"/>
<path d="M653.3 320.4 H1100.9 M1100.4 73.5 V320.9" stroke="#808080" stroke-width="1" fill="none"/>
<rect x="656" y="75.6" width="442" height="15.4" fill="url(#tg)"/>
<text x="658" y="88" font-family="Liberation Sans, Arial, sans-serif" font-size="12.4" font-weight="bold" fill="#fff" textLength="88" lengthAdjust="spacingAndGlyphs">Virtual Terminal</text>
<rect x="1083" y="78" width="13" height="10.6" fill="#d0d0d0"/>
<path d="M1083.0 78.5 H1096.0 M1083.5 78.0 V88.6" stroke="#ffffff" stroke-width="1" fill="none"/>
<path d="M1083.0 88.1 H1096.0 M1095.5 78.0 V88.6" stroke="#303030" stroke-width="1" fill="none"/>
<path d="M1086.6 80.6 l5.4 5.2 M1092 80.6 l-5.4 5.2" stroke="#000" stroke-width="1.7" fill="none"/>
<rect x="657.6" y="93" width="438" height="222.6" fill="#fff"/>
<path d="M657.6 93.7 H1095 M658.3 93 V315" stroke="#6a6a6a" stroke-width="1.4" fill="none"/>
<rect x="659" y="94.4" width="419" height="219.4" fill="#000"/>
<rect x="1078" y="94.4" width="16" height="219.4" fill="#e4e4e4"/>
<rect x="1078.6" y="96.6" width="15" height="14.6" fill="#c8c8c8"/>
<path d="M1078.6 97.1 H1093.6 M1079.1 96.6 V111.2" stroke="#f4f4f4" stroke-width="1" fill="none"/>
<path d="M1078.6 110.7 H1093.6 M1093.1 96.6 V111.2" stroke="#505050" stroke-width="1" fill="none"/>
<path d="M1082.4 105.2 l3.7 -3.8 l3.7 3.8 z" fill="#8a8a8a"/><path d="M1083.4 106.2 h6.4" stroke="#fff" stroke-width="1"/>
<rect x="1078.6" y="298.6" width="15" height="14.6" fill="#c8c8c8"/>
<path d="M1078.6 299.1 H1093.6 M1079.1 298.6 V313.2" stroke="#f4f4f4" stroke-width="1" fill="none"/>
<path d="M1078.6 312.7 H1093.6 M1093.1 298.6 V313.2" stroke="#505050" stroke-width="1" fill="none"/>
<path d="M1082.4 304.2 l3.7 3.8 l3.7 -3.8 z" fill="#8a8a8a"/><path d="M1087.2 308.6 l2.8 -3" stroke="#fff" stroke-width="1"/>
<text x="660.6" y="105" font-family="Liberation Mono, monospace" font-size="11" fill="#34e034" stroke="#34e034" stroke-width="0.15" textLength="68.6" lengthAdjust="spacingAndGlyphs">s160000</text>
<rect x="730" y="96.4" width="1.2" height="11" fill="#fff"/>
<rect x="493" y="553" width="505" height="271" fill="#c9c9c9"/>
<path d="M493.0 554.4 H998.0 M493.6 553.8 V825.0" stroke="#fafafa" stroke-width="1.2" fill="none"/>
<path d="M493.0 824.4 H998.0 M997.4 553.8 V825.0" stroke="#181818" stroke-width="1.2" fill="none"/>
<path d="M494.3 555.6 H996.7 M494.8 555.1 V823.7" stroke="#d6d6d6" stroke-width="1" fill="none"/>
<path d="M494.3 823.2 H996.7 M996.2 555.1 V823.7" stroke="#8a8a8a" stroke-width="1" fill="none"/>
<defs><linearGradient id="og" x1="0" x2="1" y1="0" y2="0"><stop offset="0" stop-color="#878787"/><stop offset="1" stop-color="#b2b2b2"/></linearGradient></defs>
<rect x="495.2" y="555.6" width="500.4" height="15.2" fill="url(#og)"/>
<text x="497" y="567.6" font-family="Liberation Sans, Arial, sans-serif" font-size="11.4" font-weight="bold" fill="#d2d2d2" textLength="102" lengthAdjust="spacingAndGlyphs">VSM Oscilloscope</text>
<rect x="980.4" y="558" width="12.6" height="10.6" fill="#d0d0d0"/>
<path d="M980.4 558.5 H993.0 M980.9 558.0 V568.6" stroke="#ffffff" stroke-width="1" fill="none"/>
<path d="M980.4 568.1 H993.0 M992.5 558.0 V568.6" stroke="#303030" stroke-width="1" fill="none"/>
<path d="M983.4 561 l5.4 4.8 M988.8 561 l-5.4 4.8" stroke="#000" stroke-width="1.6" fill="none"/>
<rect x="507" y="585" width="256" height="206" fill="#050505"/>
<rect x="508" y="586" width="254" height="204" fill="#eef2ee"/>
<rect x="509.0" y="587.0" width="251" height="201" fill="#000"/>
<rect x="509.5" y="587.5" width="250" height="200" fill="#022b02"/>
<path d="M509.50 587.5 V787.5 M534.50 587.5 V787.5 M559.50 587.5 V787.5 M584.50 587.5 V787.5 M609.50 587.5 V787.5 M634.50 587.5 V787.5 M659.50 587.5 V787.5 M684.50 587.5 V787.5 M709.50 587.5 V787.5 M734.50 587.5 V787.5 M759.50 587.5 V787.5 M509.5 587.50 H759.5 M509.5 612.50 H759.5 M509.5 637.50 H759.5 M509.5 662.50 H759.5 M509.5 687.50 H759.5 M509.5 712.50 H759.5 M509.5 737.50 H759.5 M509.5 762.50 H759.5 M509.5 787.50 H759.5 " stroke="#000" stroke-width="1.05" fill="none"/>
<path d="M509.4 687.5 L509.4 662.5 L511.8 662.5 L511.8 687.5 L533.4 687.5 L533.4 662.5 L535.8 662.5 L535.8 687.5 L557.3 687.5 L557.3 662.5 L559.7 662.5 L559.7 687.5 L581.3 687.5 L581.3 662.5 L583.7 662.5 L583.7 687.5 L605.2 687.5 L605.2 662.5 L607.6 662.5 L607.6 687.5 L629.2 687.5 L629.2 662.5 L631.6 662.5 L631.6 687.5 L653.2 687.5 L653.2 662.5 L655.6 662.5 L655.6 687.5 L677.1 687.5 L677.1 662.5 L679.5 662.5 L679.5 687.5 L701.1 687.5 L701.1 662.5 L703.5 662.5 L703.5 687.5 L725.0 687.5 L725.0 662.5 L727.4 662.5 L727.4 687.5 L749.0 687.5 L749.0 662.5 L751.4 662.5 L751.4 687.5 L759.5 687.5" fill="none" stroke="#35dc35" stroke-width="1.0" stroke-linejoin="miter"/>
<text x="506.6" y="813.2" font-family="Liberation Sans, Arial, sans-serif" font-size="16.2" fill="#000" text-anchor="start" font-style="italic" font-weight="bold">CH1</text>
<rect x="546.3" y="799.0" width="15.7" height="15.4" fill="#f2f2f2"/>
<rect x="547.5" y="800.2" width="13.3" height="13.0" fill="#7e7e7e"/>
<path d="M546.3 814.0 H561.6 V799.0" stroke="#4a4a4a" stroke-width="0.9" fill="none"/>
<circle cx="575.1" cy="802.1" r="3.6" fill="#35e335" stroke="#8fd98f" stroke-width="0.8"/><circle cx="574.5" cy="801.3" r="1.3" fill="#9dff9d"/>
<circle cx="597.3" cy="802.1" r="3.4" fill="#0b430b" stroke="#5a7a5a" stroke-width="0.7"/>
<circle cx="619.0" cy="802.1" r="3.4" fill="#0b430b" stroke="#5a7a5a" stroke-width="0.7"/>
<text x="573.8" y="815.0" font-family="Liberation Sans, Arial, sans-serif" font-size="7.6" fill="#000" text-anchor="middle" font-style="italic" font-weight="bold">DC</text>
<text x="596.0" y="815.0" font-family="Liberation Sans, Arial, sans-serif" font-size="7.6" fill="#000" text-anchor="middle" font-style="italic" font-weight="bold">GND</text>
<text x="618.3" y="815.0" font-family="Liberation Sans, Arial, sans-serif" font-size="7.6" fill="#000" text-anchor="middle" font-style="italic" font-weight="bold">AC</text>
<text x="642.6" y="813.2" font-family="Liberation Sans, Arial, sans-serif" font-size="16.2" fill="#000" text-anchor="start" font-style="italic" font-weight="bold">CH2</text>
<rect x="683.2" y="799.0" width="15.7" height="15.4" fill="#f2f2f2"/>
<rect x="684.4" y="800.2" width="13.3" height="13.0" fill="#7e7e7e"/>
<path d="M683.2 814.0 H698.5 V799.0" stroke="#4a4a4a" stroke-width="0.9" fill="none"/>
<circle cx="712.0" cy="802.1" r="3.4" fill="#0b430b" stroke="#5a7a5a" stroke-width="0.7"/>
<circle cx="734.0" cy="802.1" r="3.6" fill="#35e335" stroke="#8fd98f" stroke-width="0.8"/><circle cx="733.4" cy="801.3" r="1.3" fill="#9dff9d"/>
<circle cx="756.2" cy="802.1" r="3.4" fill="#0b430b" stroke="#5a7a5a" stroke-width="0.7"/>
<text x="711.7" y="815.0" font-family="Liberation Sans, Arial, sans-serif" font-size="7.6" fill="#000" text-anchor="middle" font-style="italic" font-weight="bold">DC</text>
<text x="734.8" y="815.0" font-family="Liberation Sans, Arial, sans-serif" font-size="7.6" fill="#000" text-anchor="middle" font-style="italic" font-weight="bold">GND</text>
<text x="756.2" y="815.0" font-family="Liberation Sans, Arial, sans-serif" font-size="7.6" fill="#000" text-anchor="middle" font-style="italic" font-weight="bold">AC</text>
<defs>
<radialGradient id="kr" cx="0.34" cy="0.28" r="0.8"><stop offset="0" stop-color="#ffe4e4"/><stop offset="0.22" stop-color="#ffb4b4"/><stop offset="0.5" stop-color="#ff6262"/><stop offset="0.8" stop-color="#f43c3c"/><stop offset="1" stop-color="#b42a2a"/></radialGradient>
<radialGradient id="kg" cx="0.26" cy="0.34" r="0.85"><stop offset="0" stop-color="#f2f8ec"/><stop offset="0.25" stop-color="#cfe0c0"/><stop offset="0.55" stop-color="#9cbc80"/><stop offset="0.85" stop-color="#7fa462"/><stop offset="1" stop-color="#5e7e4a"/></radialGradient>
<radialGradient id="kb" cx="0.26" cy="0.34" r="0.85"><stop offset="0" stop-color="#f4f4fa"/><stop offset="0.25" stop-color="#d2d2e4"/><stop offset="0.55" stop-color="#a6a6c8"/><stop offset="0.85" stop-color="#8686ac"/><stop offset="1" stop-color="#626286"/></radialGradient>
<radialGradient id="kB" cx="0.3" cy="0.26" r="0.85"><stop offset="0" stop-color="#e8e8f4"/><stop offset="0.2" stop-color="#bcbcd4"/><stop offset="0.5" stop-color="#9494b4"/><stop offset="0.8" stop-color="#74749a"/><stop offset="1" stop-color="#565678"/></radialGradient>
</defs>
<path d="M786.9 585.6 L792.3 585.6 L792.3 657.5 L800.2 665.3 L810.3 665.3 L810.3 681.9 L786.9 681.9 L775.6 670.8 L775.6 598.1 Z" fill="#ececec" stroke="#111" stroke-width="1.2" stroke-linejoin="round"/>
<path d="M795.5 585.6 L861.1 585.6 L872.8 597.3 L872.8 670.8 L861.9 681.9 L847.8 681.9 L847.8 665.3 L855.9 657.5 L855.9 606.7 L851.3 602.5 L795.5 602.5 Z" fill="#ececec" stroke="#111" stroke-width="1.2" stroke-linejoin="round"/>
<text x="825.5" y="597.2" font-family="Liberation Sans, Arial, sans-serif" font-size="9" fill="#000" text-anchor="middle" textLength="49.5" lengthAdjust="spacing" stroke="#000" stroke-width="0.15">500 200 100</text>
<text x="785.3" y="607.3" font-family="Liberation Sans, Arial, sans-serif" font-size="9" fill="#000" text-anchor="middle"  stroke="#000" stroke-width="0.15">1</text>
<text x="785.3" y="625.7" font-family="Liberation Sans, Arial, sans-serif" font-size="9" fill="#000" text-anchor="middle"  stroke="#000" stroke-width="0.15">2</text>
<text x="785.3" y="641.4" font-family="Liberation Sans, Arial, sans-serif" font-size="9" fill="#000" text-anchor="middle"  stroke="#000" stroke-width="0.15">5</text>
<text x="784.4" y="659.2" font-family="Liberation Sans, Arial, sans-serif" font-size="9" fill="#000" text-anchor="middle"  stroke="#000" stroke-width="0.15">10</text>
<text x="799.1" y="677.2" font-family="Liberation Sans, Arial, sans-serif" font-size="9" fill="#000" text-anchor="middle"  stroke="#000" stroke-width="0.15">20</text>
<text x="864.2" y="607.8" font-family="Liberation Sans, Arial, sans-serif" font-size="9" fill="#000" text-anchor="middle"  stroke="#000" stroke-width="0.15">50</text>
<text x="864.2" y="626.3" font-family="Liberation Sans, Arial, sans-serif" font-size="9" fill="#000" text-anchor="middle"  stroke="#000" stroke-width="0.15">20</text>
<text x="864.4" y="643.3" font-family="Liberation Sans, Arial, sans-serif" font-size="9" fill="#000" text-anchor="middle"  stroke="#000" stroke-width="0.15">10</text>
<text x="863.0" y="658.5" font-family="Liberation Sans, Arial, sans-serif" font-size="9" fill="#000" text-anchor="middle"  stroke="#000" stroke-width="0.15">5</text>
<text x="854.8" y="677.2" font-family="Liberation Sans, Arial, sans-serif" font-size="9" fill="#000" text-anchor="middle"  stroke="#000" stroke-width="0.15">2</text>
<text x="825.2" y="613.4" font-family="Liberation Sans, Arial, sans-serif" font-size="9" fill="#000" text-anchor="middle" font-style="italic" font-weight="bold">Y-Gain 1</text>
<circle cx="825.2" cy="637.6" r="18.1" fill="url(#kr)"/>
<path d="M825.2 637.6 L807.4 638.6" stroke="#1c1c1c" stroke-width="1.9" stroke-linecap="butt"/>
<rect x="813.8" y="668.8" width="30.2" height="13.0" rx="3" fill="#000"/>
<text x="828.9" y="679.5" font-family="Liberation Sans, Arial, sans-serif" font-size="11" fill="#35d835" text-anchor="middle" >5.0</text>
<text x="797.5" y="692.4" font-family="Liberation Sans, Arial, sans-serif" font-size="8.6" fill="#000" text-anchor="middle"  stroke="#000" stroke-width="0.15">V/Div</text>
<text x="852.8" y="692.4" font-family="Liberation Sans, Arial, sans-serif" font-size="8.6" fill="#000" text-anchor="middle"  stroke="#000" stroke-width="0.15">mV/Div</text>
<path d="M786.9 706.6 L792.3 706.6 L792.3 778.5 L800.2 786.3 L810.3 786.3 L810.3 802.9 L786.9 802.9 L775.6 791.8 L775.6 719.1 Z" fill="#ececec" stroke="#111" stroke-width="1.2" stroke-linejoin="round"/>
<path d="M795.5 706.6 L861.1 706.6 L872.8 718.3 L872.8 791.8 L861.9 802.9 L847.8 802.9 L847.8 786.3 L855.9 778.5 L855.9 727.7 L851.3 723.5 L795.5 723.5 Z" fill="#ececec" stroke="#111" stroke-width="1.2" stroke-linejoin="round"/>
<text x="825.5" y="717.9" font-family="Liberation Sans, Arial, sans-serif" font-size="9" fill="#000" text-anchor="middle" textLength="49.5" lengthAdjust="spacing" stroke="#000" stroke-width="0.15">500 200 100</text>
<text x="785.3" y="728.0" font-family="Liberation Sans, Arial, sans-serif" font-size="9" fill="#000" text-anchor="middle"  stroke="#000" stroke-width="0.15">1</text>
<text x="785.3" y="746.4" font-family="Liberation Sans, Arial, sans-serif" font-size="9" fill="#000" text-anchor="middle"  stroke="#000" stroke-width="0.15">2</text>
<text x="785.3" y="762.1" font-family="Liberation Sans, Arial, sans-serif" font-size="9" fill="#000" text-anchor="middle"  stroke="#000" stroke-width="0.15">5</text>
<text x="784.4" y="779.9" font-family="Liberation Sans, Arial, sans-serif" font-size="9" fill="#000" text-anchor="middle"  stroke="#000" stroke-width="0.15">10</text>
<text x="799.1" y="797.9" font-family="Liberation Sans, Arial, sans-serif" font-size="9" fill="#000" text-anchor="middle"  stroke="#000" stroke-width="0.15">20</text>
<text x="864.2" y="728.5" font-family="Liberation Sans, Arial, sans-serif" font-size="9" fill="#000" text-anchor="middle"  stroke="#000" stroke-width="0.15">50</text>
<text x="864.2" y="747.0" font-family="Liberation Sans, Arial, sans-serif" font-size="9" fill="#000" text-anchor="middle"  stroke="#000" stroke-width="0.15">20</text>
<text x="864.4" y="764.0" font-family="Liberation Sans, Arial, sans-serif" font-size="9" fill="#000" text-anchor="middle"  stroke="#000" stroke-width="0.15">10</text>
<text x="863.0" y="779.2" font-family="Liberation Sans, Arial, sans-serif" font-size="9" fill="#000" text-anchor="middle"  stroke="#000" stroke-width="0.15">5</text>
<text x="854.8" y="797.9" font-family="Liberation Sans, Arial, sans-serif" font-size="9" fill="#000" text-anchor="middle"  stroke="#000" stroke-width="0.15">2</text>
<text x="825.2" y="733.6" font-family="Liberation Sans, Arial, sans-serif" font-size="9" fill="#000" text-anchor="middle" font-style="italic" font-weight="bold">Y-Gain 2</text>
<circle cx="825.2" cy="760.6" r="18.1" fill="url(#kr)"/>
<path d="M824.4 760.6 L816.9 744.3" stroke="#1c1c1c" stroke-width="1.9" stroke-linecap="butt"/>
<rect x="813.8" y="792.0" width="30.2" height="10.8" rx="3" fill="#000"/>
<text x="828.9" y="800.5" font-family="Liberation Sans, Arial, sans-serif" font-size="11" fill="#35d835" text-anchor="middle" >500m</text>
<text x="797.5" y="813.4" font-family="Liberation Sans, Arial, sans-serif" font-size="8.6" fill="#000" text-anchor="middle"  stroke="#000" stroke-width="0.15">V/Div</text>
<text x="852.8" y="813.4" font-family="Liberation Sans, Arial, sans-serif" font-size="8.6" fill="#000" text-anchor="middle"  stroke="#000" stroke-width="0.15">mV/Div</text>
<text x="891.2" y="592.2" font-family="Liberation Sans, Arial, sans-serif" font-size="7.2" fill="#000" text-anchor="middle" font-style="italic" font-weight="bold">Y-Pos 1</text>
<circle cx="891.1" cy="612.1" r="13.3" fill="url(#kg)"/>
<path d="M889.9 612.6 L889.9 599.6" stroke="#1c1c1c" stroke-width="1.9" stroke-linecap="butt"/>
<text x="890.8" y="640.0" font-family="Liberation Sans, Arial, sans-serif" font-size="7.2" fill="#000" text-anchor="middle" font-style="italic" font-weight="bold">Y-Pos 2</text>
<circle cx="891.1" cy="660.3" r="13.3" fill="url(#kg)"/>
<path d="M889.9 660.8 L889.9 647.8" stroke="#1c1c1c" stroke-width="1.9" stroke-linecap="butt"/>
<rect x="923.2" y="587.3" width="19.8" height="19.4" fill="#f2f2f2"/>
<rect x="924.4" y="588.5" width="17.4" height="17.0" fill="#7e7e7e"/>
<path d="M923.2 606.3 H942.6 V587.3" stroke="#4a4a4a" stroke-width="0.9" fill="none"/>
<rect x="923.2" y="616.1" width="19.8" height="19.4" fill="#f2f2f2"/>
<rect x="924.4" y="617.3" width="17.4" height="17.0" fill="#7e7e7e"/>
<path d="M923.2 635.1 H942.6 V616.1" stroke="#4a4a4a" stroke-width="0.9" fill="none"/>
<text x="961.2" y="592.4" font-family="Liberation Sans, Arial, sans-serif" font-size="8.2" fill="#000" text-anchor="middle" font-style="italic" font-weight="bold">Ch.1</text>
<text x="961.2" y="604.8" font-family="Liberation Sans, Arial, sans-serif" font-size="8.2" fill="#000" text-anchor="middle" font-style="italic" font-weight="bold">Ch.2</text>
<text x="961.0" y="622.7" font-family="Liberation Sans, Arial, sans-serif" font-size="8.2" fill="#000" text-anchor="middle" font-style="italic" font-weight="bold">Dual</text>
<text x="960.0" y="634.8" font-family="Liberation Sans, Arial, sans-serif" font-size="8.2" fill="#000" text-anchor="middle" font-style="italic" font-weight="bold">X-Y</text>
<circle cx="982.4" cy="589.9" r="3.6" fill="#35e335" stroke="#8fd98f" stroke-width="0.8"/><circle cx="981.8" cy="589.1" r="1.3" fill="#9dff9d"/>
<circle cx="982.4" cy="602.2" r="3.4" fill="#0b430b" stroke="#5a7a5a" stroke-width="0.7"/>
<circle cx="982.4" cy="620.0" r="3.4" fill="#0b430b" stroke="#5a7a5a" stroke-width="0.7"/>
<circle cx="982.4" cy="632.2" r="3.4" fill="#0b430b" stroke="#5a7a5a" stroke-width="0.7"/>
<text x="932.6" y="653.4" font-family="Liberation Sans, Arial, sans-serif" font-size="8.1" fill="#000" text-anchor="middle" font-style="italic" font-weight="bold">Trigger</text>
<text x="972.6" y="653.4" font-family="Liberation Sans, Arial, sans-serif" font-size="8.1" fill="#000" text-anchor="middle" font-style="italic" font-weight="bold">X -Pos</text>
<circle cx="931.7" cy="674.6" r="13.4" fill="url(#kb)"/>
<path d="M930.8 674.8 L930.8 661.8" stroke="#1c1c1c" stroke-width="1.9" stroke-linecap="butt"/>
<circle cx="974.0" cy="674.6" r="13.4" fill="url(#kb)"/>
<path d="M973.0 674.8 L973.0 661.8" stroke="#1c1c1c" stroke-width="1.9" stroke-linecap="butt"/>
<path d="M892.1 699.7 L903.0 699.7 L903.0 716.0 L896.0 722.5 L896.0 777.7 L904.0 786.4 L924.0 786.4 L924.0 802.8 L892.1 802.8 L879.8 790.7 L879.8 712.7 Z" fill="#ececec" stroke="#111" stroke-width="1.2" stroke-linejoin="round"/>
<path d="M906.6 699.7 L969.7 699.7 L983.1 712.3 L983.1 802.8 L959.7 802.8 L959.7 785.3 L966.2 778.4 L966.2 722.5 L960.3 716.4 L906.6 716.4 Z" fill="#ececec" stroke="#111" stroke-width="1.2" stroke-linejoin="round"/>
<text x="898.0" y="711.8" font-family="Liberation Sans, Arial, sans-serif" font-size="9" fill="#000" text-anchor="middle"  stroke="#000" stroke-width="0.15">1</text>
<text x="888.9" y="727.6" font-family="Liberation Sans, Arial, sans-serif" font-size="9" fill="#000" text-anchor="middle"  stroke="#000" stroke-width="0.15">2</text>
<text x="888.9" y="742.0" font-family="Liberation Sans, Arial, sans-serif" font-size="9" fill="#000" text-anchor="middle"  stroke="#000" stroke-width="0.15">5</text>
<text x="888.4" y="755.8" font-family="Liberation Sans, Arial, sans-serif" font-size="9" fill="#000" text-anchor="middle"  stroke="#000" stroke-width="0.15">10</text>
<text x="888.4" y="768.4" font-family="Liberation Sans, Arial, sans-serif" font-size="9" fill="#000" text-anchor="middle"  stroke="#000" stroke-width="0.15">20</text>
<text x="888.4" y="783.2" font-family="Liberation Sans, Arial, sans-serif" font-size="9" fill="#000" text-anchor="middle"  stroke="#000" stroke-width="0.15">50</text>
<text x="974.0" y="727.6" font-family="Liberation Sans, Arial, sans-serif" font-size="9" fill="#000" text-anchor="middle"  stroke="#000" stroke-width="0.15">20</text>
<text x="974.4" y="742.0" font-family="Liberation Sans, Arial, sans-serif" font-size="9" fill="#000" text-anchor="middle"  stroke="#000" stroke-width="0.15">10</text>
<text x="974.0" y="754.8" font-family="Liberation Sans, Arial, sans-serif" font-size="9" fill="#000" text-anchor="middle"  stroke="#000" stroke-width="0.15">5</text>
<text x="974.0" y="768.7" font-family="Liberation Sans, Arial, sans-serif" font-size="9" fill="#000" text-anchor="middle"  stroke="#000" stroke-width="0.15">2</text>
<text x="974.4" y="783.2" font-family="Liberation Sans, Arial, sans-serif" font-size="9" fill="#000" text-anchor="middle"  stroke="#000" stroke-width="0.15">1</text>
<text x="970.1" y="797.5" font-family="Liberation Sans, Arial, sans-serif" font-size="9" fill="#000" text-anchor="middle"  stroke="#000" stroke-width="0.15">0.5</text>
<text x="905.6" y="797.7" font-family="Liberation Sans, Arial, sans-serif" font-size="9" fill="#000" text-anchor="middle" textLength="30" lengthAdjust="spacing" stroke="#000" stroke-width="0.15">100 200</text>
<text x="939.0" y="711.2" font-family="Liberation Sans, Arial, sans-serif" font-size="9" fill="#000" text-anchor="middle" textLength="60" lengthAdjust="spacing" stroke="#000" stroke-width="0.15">500 200 100  50</text>
<text x="931.5" y="727.9" font-family="Liberation Sans, Arial, sans-serif" font-size="9" fill="#000" text-anchor="middle" font-style="italic" font-weight="bold">Timebase</text>
<circle cx="931.1" cy="757.1" r="18.2" fill="url(#kB)"/>
<path d="M931.1 757.1 L915.2 760.4" stroke="#1c1c1c" stroke-width="1.9" stroke-linecap="butt"/>
<rect x="927.4" y="791.6" width="29.3" height="11.4" rx="3" fill="#000"/>
<text x="942.0" y="800.7" font-family="Liberation Sans, Arial, sans-serif" font-size="11" fill="#35d835" text-anchor="middle" >20m</text>
<text x="907.9" y="813.0" font-family="Liberation Sans, Arial, sans-serif" font-size="8.6" fill="#000" text-anchor="middle"  stroke="#000" stroke-width="0.15">ms/Div</text>
<text x="964.7" y="813.0" font-family="Liberation Sans, Arial, sans-serif" font-size="8.6" fill="#000" text-anchor="middle"  stroke="#000" stroke-width="0.15">µs/Div</text>
</g>
</svg></body></html>
